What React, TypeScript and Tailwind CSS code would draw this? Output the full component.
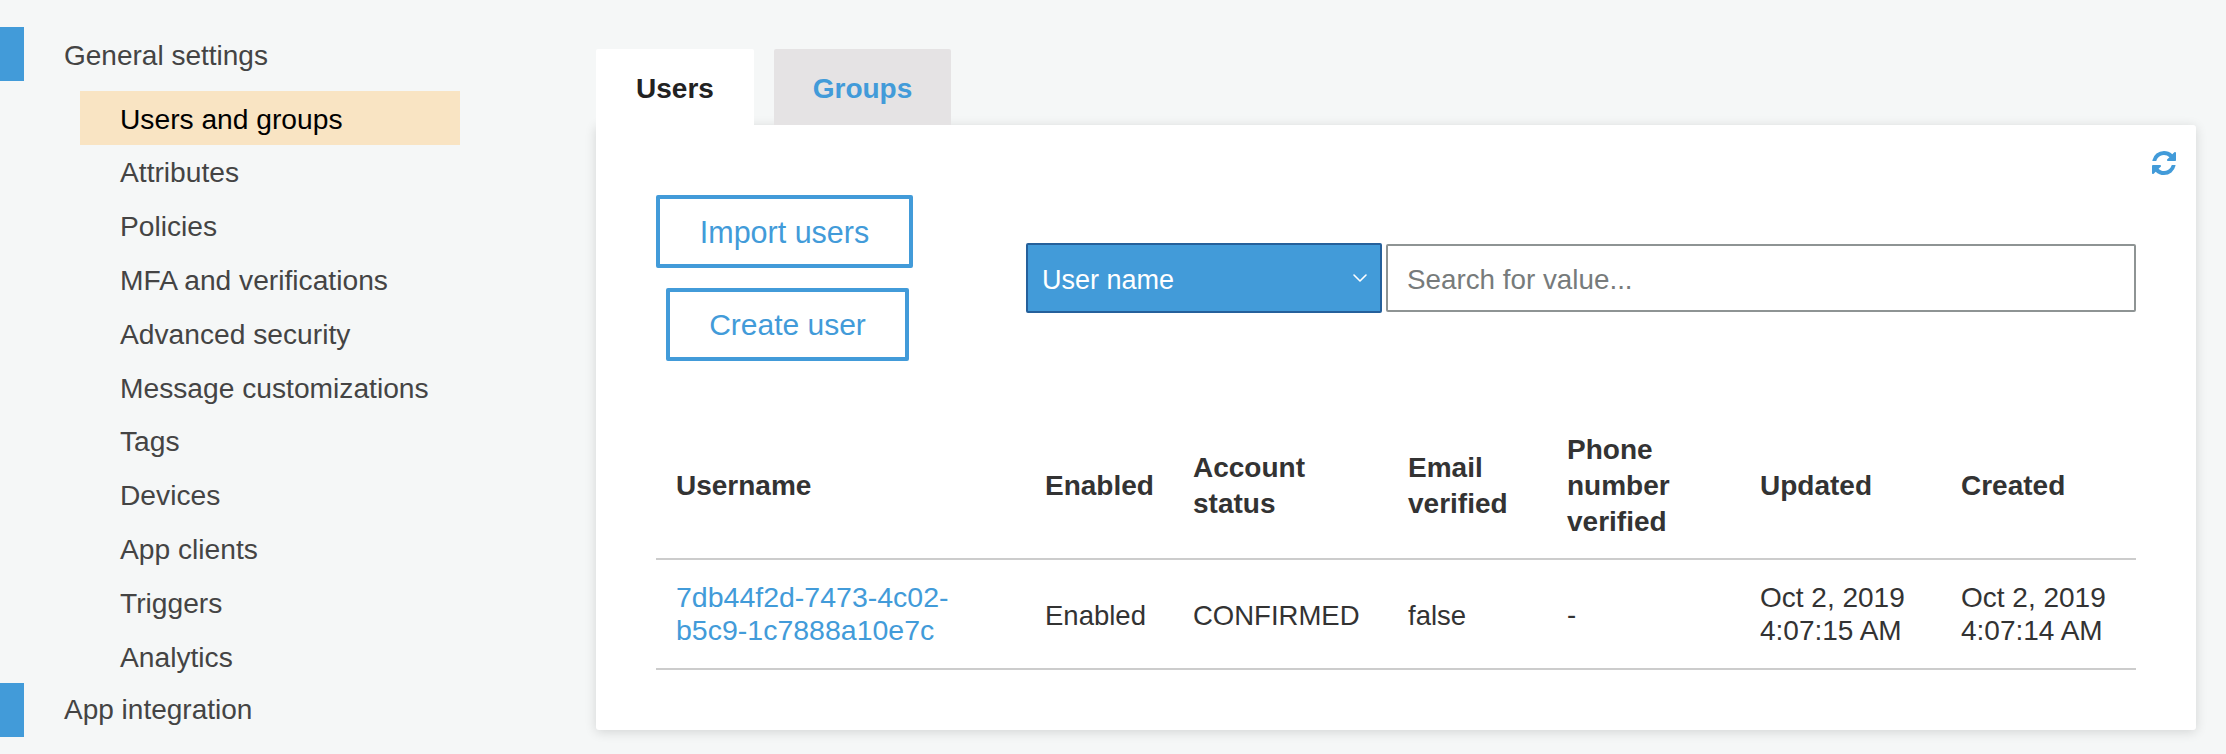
import React from "react";
import { ChevronDown } from "lucide-react";

const items = [
  "Attributes",
  "Policies",
  "MFA and verifications",
  "Advanced security",
  "Message customizations",
  "Tags",
  "Devices",
  "App clients",
  "Triggers",
  "Analytics",
];

function Section({ label, className }: { label: string; className: string }) {
  return (
    <div className={`flex h-[54px] items-center ${className}`}>
      <div className="h-full w-[24px] bg-[#429bd9]" />
      <span className="ml-[40px] text-[#444444]">{label}</span>
    </div>
  );
}

function RefreshIcon() {
  return (
    <svg viewBox="128 128 1536 1536" className="h-[24px] w-[24px] fill-[#429bd9]">
      <path d="M1639 1056q0 5-1 7-64 268-268 434.5t-478 166.5q-146 0-282.500-55t-243.500-157l-129 129q-19 19-45 19t-45-19-19-45v-448q0-26 19-45t45-19h448q26 0 45 19t19 45-19 45l-137 137q71 66 161 102t187 36q134 0 250-65t186-179q11-17 53-117 8-23 30-23h192q13 0 22.500 9.500t9.500 22.500zm25-800v448q0 26-19 45t-45 19h-448q-26 0-45-19t-19-45 19-45l138-138q-148-137-349-137-134 0-250 65t-186 179q-11 17-53 117-8 23-30 23h-199q-13 0-22.500-9.500t-9.500-22.500v-7q65-268 270-434.500t480-166.500q146 0 284 55.500t245 156.500l130-129q19-19 45-19t45 19 19 45z" />
    </svg>
  );
}

export default function App() {
  return (
    <div className="flex h-[754px] w-[2226px] overflow-hidden bg-[#f5f7f7] font-['Liberation_Sans',Arial,sans-serif] text-[28px] leading-[36px] text-[#444444]">
      <nav className="w-[596px] shrink-0 pt-[27px]">
        <Section label="General settings" className="[&>span]:pt-[3px]" />
        <ul className="ml-[80px] mt-[10px] w-[380px]">
          <li className="flex h-[54px] items-center bg-[#f9e4c3] pl-[40px] pt-[2px] text-[28.2px] text-black">Users and groups</li>
          {items.map((t) => (
            <li key={t} className="flex h-[53.8px] items-center pl-[40px] pt-[1px] text-[28.2px]">
              {t}
            </li>
          ))}
        </ul>
        <Section label="App integration" className="" />
      </nav>

      <main className="w-[1600px] shrink-0 pt-[49px]">
        <div className="flex h-[76px] gap-[20px]">
          <div className="flex w-[158px] items-center justify-center rounded-t-[2px] bg-white pt-[3px] font-bold text-[#222222]">Users</div>
          <div className="flex w-[177px] items-center justify-center rounded-t-[2px] bg-[#e5e3e4] pt-[3px] font-bold text-[#429bd9]">Groups</div>
        </div>
        <section className="h-[605px] rounded-b-[3px] rounded-tr-[3px] bg-white shadow-[0_2px_12px_rgba(0,0,0,0.14)]">
          <div className="flex justify-end pr-[20px] pt-[26px]">
            <RefreshIcon />
          </div>
          <div className="px-[60px]">
            <div className="mt-[20px] flex items-center">
              <div className="flex w-[257px] flex-col">
                <button className="h-[73px] w-[257px] rounded-[2px] border-4 border-[#429bd9] bg-white pt-[1px] text-[30.5px] text-[#429bd9]">Import users</button>
                <button className="ml-[10px] mt-[20px] h-[73px] w-[243px] rounded-[2px] border-4 border-[#429bd9] bg-white text-[30px] text-[#429bd9]">Create user</button>
              </div>
              <div className="ml-[113px] flex h-[70px] w-[356px] items-center justify-between rounded-[2px] border-2 border-[#25609b] bg-[#429bd9] pl-[14px] pr-[8px] text-[27px] text-white">
                <span className="pt-[3px]">User name</span>
                <ChevronDown className="h-[24px] w-[24px] text-white" strokeWidth={1.6} />
              </div>
              <input
                className="ml-[4px] h-[68px] w-[750px] rounded-[2px] border-2 border-[#8e9494] bg-white pl-[19px] pt-[3px] text-[27.8px] text-[#444444] outline-none placeholder:text-[#777b7b]"
                placeholder="Search for value..."
              />
            </div>
            <table className="mt-[52px] w-[1480px] table-fixed border-collapse text-left">
              <colgroup>
                <col className="w-[369px]" />
                <col className="w-[148px]" />
                <col className="w-[214px]" />
                <col className="w-[159px]" />
                <col className="w-[194px]" />
                <col className="w-[200px]" />
                <col className="w-[196px]" />
              </colgroup>
              <thead>
                <tr className="h-[146px] border-b-2 border-[#cccccc] font-bold text-[#333333]">
                  <th className="pl-[20px] font-bold">Username</th>
                  <th className="pl-[20px] font-bold">Enabled</th>
                  <th className="pl-[20px] font-bold">Account<br />status</th>
                  <th className="pl-[21px] font-bold">Email<br />verified</th>
                  <th className="pl-[21px] font-bold">Phone<br />number<br />verified</th>
                  <th className="pl-[20px] font-bold">Updated</th>
                  <th className="pl-[21px] font-bold">Created</th>
                </tr>
              </thead>
              <tbody>
                <tr className="h-[110px] border-b-2 border-[#cccccc] text-[27.5px] leading-[33px] text-[#333333]">
                  <td className="pl-[20px] text-[28.5px] text-[#429bd9]">7db44f2d-7473-4c02-<br />b5c9-1c7888a10e7c</td>
                  <td className="pl-[20px] pt-[2px]">Enabled</td>
                  <td className="pl-[20px] pt-[2px]">CONFIRMED</td>
                  <td className="pl-[21px] pt-[2px]">false</td>
                  <td className="pl-[21px]">-</td>
                  <td className="pl-[20px] text-[28px]">Oct 2, 2019<br />4:07:15 AM</td>
                  <td className="pl-[21px] text-[28px]">Oct 2, 2019<br />4:07:14 AM</td>
                </tr>
              </tbody>
            </table>
          </div>
        </section>
      </main>
    </div>
  );
}
